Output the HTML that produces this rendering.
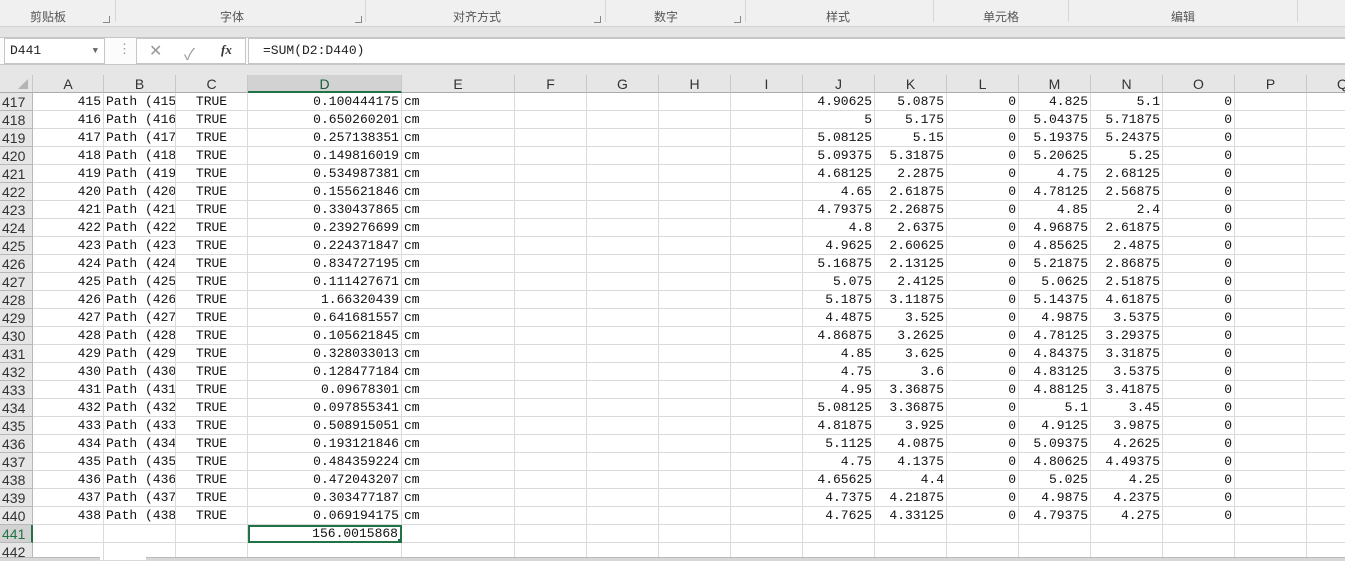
<!DOCTYPE html>
<html><head><meta charset="utf-8"><style>
*{box-sizing:border-box;margin:0;padding:0}
body{width:1345px;height:561px;overflow:hidden;background:#e6e6e6;font-family:"Liberation Sans","Noto Sans CJK SC",sans-serif;position:relative}
.rib{position:absolute;left:0;top:0;width:1345px;height:27px;background:#f0f0f0;border-bottom:1px solid #d2d2d2}
.lb{position:absolute;top:9px;font-size:12px;color:#555;font-family:"Noto Sans CJK SC",sans-serif;line-height:16px;transform:translateX(-50%)}
.sep{position:absolute;top:0;height:22px;width:1px;background:#d6d6d6}
.dl{position:absolute;top:16px;width:7px;height:7px;border-right:1px solid #888;border-bottom:1px solid #888}
.band{position:absolute;left:0;top:27px;width:1345px;height:11px;background:#e4e4e4;border-bottom:1px solid #c6c6c6}
.fb{position:absolute;left:0;top:38px;width:1345px;height:27px;background:#fcfcfc;border-bottom:1px solid #c6c6c6}
.nb{position:absolute;left:4px;top:0;width:101px;height:26px;border:1px solid #c6c6c6;background:#fff;font-family:"Liberation Mono",monospace;font-size:13px;line-height:24px;padding-left:5px;color:#222}
.fx{position:absolute;left:136px;top:0;width:110px;height:26px;border:1px solid #c6c6c6;background:#fff;color:#999}
.fi{position:absolute;left:248px;top:0;width:1100px;height:26px;border:1px solid #c6c6c6;background:#fff;font-family:"Liberation Mono",monospace;font-size:13px;line-height:24px;padding-left:14px;color:#222}
.grid{position:absolute;left:0;top:75px;width:1400px}
.r{display:flex;height:18px;font-family:"Liberation Mono",monospace;font-size:13px;color:#111}
.r>div{flex:none;height:18px;border-right:1px solid #dadada;border-bottom:1px solid #dadada;background:#fff;overflow:hidden;white-space:nowrap;line-height:18px;padding:0 2px}
.r>div.n{text-align:right}
.r>div.h{background:#e6e6e6;font-family:"Liberation Sans",sans-serif;font-size:14px;color:#333;text-align:left;border-right:1px solid #b8b8b8;border-bottom:1px solid #b8b8b8;line-height:19px}
.hd>div{background:#e6e6e6;font-family:"Liberation Sans",sans-serif;font-size:14px;color:#333;text-align:center;border-right:1px solid #c8c8c8;border-bottom:1px solid #ababab}
.c0{width:33px}.cA{width:71px}.cB,.cC{width:72px}.cD{width:154px}.cE{width:113px}.cx{width:72px}.cQ{width:72px}
.cC{text-align:center}
</style></head><body>
<div class="rib">
<span class="lb" style="left:48px">剪贴板</span><span class="lb" style="left:232px">字体</span><span class="lb" style="left:477px">对齐方式</span><span class="lb" style="left:666px">数字</span><span class="lb" style="left:838px">样式</span><span class="lb" style="left:1001px">单元格</span><span class="lb" style="left:1183px">编辑</span>
<div class="sep" style="left:115px"></div><div class="sep" style="left:365px"></div><div class="sep" style="left:605px"></div><div class="sep" style="left:745px"></div><div class="sep" style="left:933px"></div><div class="sep" style="left:1068px"></div><div class="sep" style="left:1297px"></div>
<div class="dl" style="left:103px"></div><div class="dl" style="left:355px"></div><div class="dl" style="left:594px"></div><div class="dl" style="left:734px"></div>
</div>
<div class="band"></div>
<div class="fb">
<div class="nb">D441<span style="position:absolute;right:6px;top:0;font-size:9px;color:#666">▼</span></div>
<span style="position:absolute;left:118px;top:3px;color:#999;font-size:13px">⋮</span>
<div class="fx"><span style="position:absolute;left:12px;top:2px;font-size:16px">✕</span><span style="position:absolute;left:47px;top:2px;font-size:16px">✓</span><span style="position:absolute;left:84px;top:3px;font-size:13px;color:#333;font-style:italic;font-family:'Liberation Serif',serif;font-weight:bold">fx</span></div>
<div class="fi">=SUM(D2:D440)</div>
</div>
<div class="grid">
<div class="r hd"><div class="c0" style="position:relative"><span style="position:absolute;right:4px;bottom:3px;width:0;height:0;border-left:10px solid transparent;border-bottom:10px solid #b4b4b4"></span></div><div class="cA">A</div><div class="cB">B</div><div class="cC">C</div><div class="cD" style="background:#d2d2d2;border-bottom:2px solid #217346;color:#1d5c38">D</div><div class="cE">E</div><div class="cx">F</div><div class="cx">G</div><div class="cx">H</div><div class="cx">I</div><div class="cx">J</div><div class="cx">K</div><div class="cx">L</div><div class="cx">M</div><div class="cx">N</div><div class="cx">O</div><div class="cx">P</div><div class="cQ">Q</div></div>
<div class="r"><div class="c0 h">417</div><div class="cA n">415</div><div class="cB">Path (415)</div><div class="cC">TRUE</div><div class="cD n">0.100444175</div><div class="cE">cm</div><div class="cx"></div><div class="cx"></div><div class="cx"></div><div class="cx"></div><div class="cx n">4.90625</div><div class="cx n">5.0875</div><div class="cx n">0</div><div class="cx n">4.825</div><div class="cx n">5.1</div><div class="cx n">0</div><div class="cx"></div><div class="cQ"></div></div>
<div class="r"><div class="c0 h">418</div><div class="cA n">416</div><div class="cB">Path (416)</div><div class="cC">TRUE</div><div class="cD n">0.650260201</div><div class="cE">cm</div><div class="cx"></div><div class="cx"></div><div class="cx"></div><div class="cx"></div><div class="cx n">5</div><div class="cx n">5.175</div><div class="cx n">0</div><div class="cx n">5.04375</div><div class="cx n">5.71875</div><div class="cx n">0</div><div class="cx"></div><div class="cQ"></div></div>
<div class="r"><div class="c0 h">419</div><div class="cA n">417</div><div class="cB">Path (417)</div><div class="cC">TRUE</div><div class="cD n">0.257138351</div><div class="cE">cm</div><div class="cx"></div><div class="cx"></div><div class="cx"></div><div class="cx"></div><div class="cx n">5.08125</div><div class="cx n">5.15</div><div class="cx n">0</div><div class="cx n">5.19375</div><div class="cx n">5.24375</div><div class="cx n">0</div><div class="cx"></div><div class="cQ"></div></div>
<div class="r"><div class="c0 h">420</div><div class="cA n">418</div><div class="cB">Path (418)</div><div class="cC">TRUE</div><div class="cD n">0.149816019</div><div class="cE">cm</div><div class="cx"></div><div class="cx"></div><div class="cx"></div><div class="cx"></div><div class="cx n">5.09375</div><div class="cx n">5.31875</div><div class="cx n">0</div><div class="cx n">5.20625</div><div class="cx n">5.25</div><div class="cx n">0</div><div class="cx"></div><div class="cQ"></div></div>
<div class="r"><div class="c0 h">421</div><div class="cA n">419</div><div class="cB">Path (419)</div><div class="cC">TRUE</div><div class="cD n">0.534987381</div><div class="cE">cm</div><div class="cx"></div><div class="cx"></div><div class="cx"></div><div class="cx"></div><div class="cx n">4.68125</div><div class="cx n">2.2875</div><div class="cx n">0</div><div class="cx n">4.75</div><div class="cx n">2.68125</div><div class="cx n">0</div><div class="cx"></div><div class="cQ"></div></div>
<div class="r"><div class="c0 h">422</div><div class="cA n">420</div><div class="cB">Path (420)</div><div class="cC">TRUE</div><div class="cD n">0.155621846</div><div class="cE">cm</div><div class="cx"></div><div class="cx"></div><div class="cx"></div><div class="cx"></div><div class="cx n">4.65</div><div class="cx n">2.61875</div><div class="cx n">0</div><div class="cx n">4.78125</div><div class="cx n">2.56875</div><div class="cx n">0</div><div class="cx"></div><div class="cQ"></div></div>
<div class="r"><div class="c0 h">423</div><div class="cA n">421</div><div class="cB">Path (421)</div><div class="cC">TRUE</div><div class="cD n">0.330437865</div><div class="cE">cm</div><div class="cx"></div><div class="cx"></div><div class="cx"></div><div class="cx"></div><div class="cx n">4.79375</div><div class="cx n">2.26875</div><div class="cx n">0</div><div class="cx n">4.85</div><div class="cx n">2.4</div><div class="cx n">0</div><div class="cx"></div><div class="cQ"></div></div>
<div class="r"><div class="c0 h">424</div><div class="cA n">422</div><div class="cB">Path (422)</div><div class="cC">TRUE</div><div class="cD n">0.239276699</div><div class="cE">cm</div><div class="cx"></div><div class="cx"></div><div class="cx"></div><div class="cx"></div><div class="cx n">4.8</div><div class="cx n">2.6375</div><div class="cx n">0</div><div class="cx n">4.96875</div><div class="cx n">2.61875</div><div class="cx n">0</div><div class="cx"></div><div class="cQ"></div></div>
<div class="r"><div class="c0 h">425</div><div class="cA n">423</div><div class="cB">Path (423)</div><div class="cC">TRUE</div><div class="cD n">0.224371847</div><div class="cE">cm</div><div class="cx"></div><div class="cx"></div><div class="cx"></div><div class="cx"></div><div class="cx n">4.9625</div><div class="cx n">2.60625</div><div class="cx n">0</div><div class="cx n">4.85625</div><div class="cx n">2.4875</div><div class="cx n">0</div><div class="cx"></div><div class="cQ"></div></div>
<div class="r"><div class="c0 h">426</div><div class="cA n">424</div><div class="cB">Path (424)</div><div class="cC">TRUE</div><div class="cD n">0.834727195</div><div class="cE">cm</div><div class="cx"></div><div class="cx"></div><div class="cx"></div><div class="cx"></div><div class="cx n">5.16875</div><div class="cx n">2.13125</div><div class="cx n">0</div><div class="cx n">5.21875</div><div class="cx n">2.86875</div><div class="cx n">0</div><div class="cx"></div><div class="cQ"></div></div>
<div class="r"><div class="c0 h">427</div><div class="cA n">425</div><div class="cB">Path (425)</div><div class="cC">TRUE</div><div class="cD n">0.111427671</div><div class="cE">cm</div><div class="cx"></div><div class="cx"></div><div class="cx"></div><div class="cx"></div><div class="cx n">5.075</div><div class="cx n">2.4125</div><div class="cx n">0</div><div class="cx n">5.0625</div><div class="cx n">2.51875</div><div class="cx n">0</div><div class="cx"></div><div class="cQ"></div></div>
<div class="r"><div class="c0 h">428</div><div class="cA n">426</div><div class="cB">Path (426)</div><div class="cC">TRUE</div><div class="cD n">1.66320439</div><div class="cE">cm</div><div class="cx"></div><div class="cx"></div><div class="cx"></div><div class="cx"></div><div class="cx n">5.1875</div><div class="cx n">3.11875</div><div class="cx n">0</div><div class="cx n">5.14375</div><div class="cx n">4.61875</div><div class="cx n">0</div><div class="cx"></div><div class="cQ"></div></div>
<div class="r"><div class="c0 h">429</div><div class="cA n">427</div><div class="cB">Path (427)</div><div class="cC">TRUE</div><div class="cD n">0.641681557</div><div class="cE">cm</div><div class="cx"></div><div class="cx"></div><div class="cx"></div><div class="cx"></div><div class="cx n">4.4875</div><div class="cx n">3.525</div><div class="cx n">0</div><div class="cx n">4.9875</div><div class="cx n">3.5375</div><div class="cx n">0</div><div class="cx"></div><div class="cQ"></div></div>
<div class="r"><div class="c0 h">430</div><div class="cA n">428</div><div class="cB">Path (428)</div><div class="cC">TRUE</div><div class="cD n">0.105621845</div><div class="cE">cm</div><div class="cx"></div><div class="cx"></div><div class="cx"></div><div class="cx"></div><div class="cx n">4.86875</div><div class="cx n">3.2625</div><div class="cx n">0</div><div class="cx n">4.78125</div><div class="cx n">3.29375</div><div class="cx n">0</div><div class="cx"></div><div class="cQ"></div></div>
<div class="r"><div class="c0 h">431</div><div class="cA n">429</div><div class="cB">Path (429)</div><div class="cC">TRUE</div><div class="cD n">0.328033013</div><div class="cE">cm</div><div class="cx"></div><div class="cx"></div><div class="cx"></div><div class="cx"></div><div class="cx n">4.85</div><div class="cx n">3.625</div><div class="cx n">0</div><div class="cx n">4.84375</div><div class="cx n">3.31875</div><div class="cx n">0</div><div class="cx"></div><div class="cQ"></div></div>
<div class="r"><div class="c0 h">432</div><div class="cA n">430</div><div class="cB">Path (430)</div><div class="cC">TRUE</div><div class="cD n">0.128477184</div><div class="cE">cm</div><div class="cx"></div><div class="cx"></div><div class="cx"></div><div class="cx"></div><div class="cx n">4.75</div><div class="cx n">3.6</div><div class="cx n">0</div><div class="cx n">4.83125</div><div class="cx n">3.5375</div><div class="cx n">0</div><div class="cx"></div><div class="cQ"></div></div>
<div class="r"><div class="c0 h">433</div><div class="cA n">431</div><div class="cB">Path (431)</div><div class="cC">TRUE</div><div class="cD n">0.09678301</div><div class="cE">cm</div><div class="cx"></div><div class="cx"></div><div class="cx"></div><div class="cx"></div><div class="cx n">4.95</div><div class="cx n">3.36875</div><div class="cx n">0</div><div class="cx n">4.88125</div><div class="cx n">3.41875</div><div class="cx n">0</div><div class="cx"></div><div class="cQ"></div></div>
<div class="r"><div class="c0 h">434</div><div class="cA n">432</div><div class="cB">Path (432)</div><div class="cC">TRUE</div><div class="cD n">0.097855341</div><div class="cE">cm</div><div class="cx"></div><div class="cx"></div><div class="cx"></div><div class="cx"></div><div class="cx n">5.08125</div><div class="cx n">3.36875</div><div class="cx n">0</div><div class="cx n">5.1</div><div class="cx n">3.45</div><div class="cx n">0</div><div class="cx"></div><div class="cQ"></div></div>
<div class="r"><div class="c0 h">435</div><div class="cA n">433</div><div class="cB">Path (433)</div><div class="cC">TRUE</div><div class="cD n">0.508915051</div><div class="cE">cm</div><div class="cx"></div><div class="cx"></div><div class="cx"></div><div class="cx"></div><div class="cx n">4.81875</div><div class="cx n">3.925</div><div class="cx n">0</div><div class="cx n">4.9125</div><div class="cx n">3.9875</div><div class="cx n">0</div><div class="cx"></div><div class="cQ"></div></div>
<div class="r"><div class="c0 h">436</div><div class="cA n">434</div><div class="cB">Path (434)</div><div class="cC">TRUE</div><div class="cD n">0.193121846</div><div class="cE">cm</div><div class="cx"></div><div class="cx"></div><div class="cx"></div><div class="cx"></div><div class="cx n">5.1125</div><div class="cx n">4.0875</div><div class="cx n">0</div><div class="cx n">5.09375</div><div class="cx n">4.2625</div><div class="cx n">0</div><div class="cx"></div><div class="cQ"></div></div>
<div class="r"><div class="c0 h">437</div><div class="cA n">435</div><div class="cB">Path (435)</div><div class="cC">TRUE</div><div class="cD n">0.484359224</div><div class="cE">cm</div><div class="cx"></div><div class="cx"></div><div class="cx"></div><div class="cx"></div><div class="cx n">4.75</div><div class="cx n">4.1375</div><div class="cx n">0</div><div class="cx n">4.80625</div><div class="cx n">4.49375</div><div class="cx n">0</div><div class="cx"></div><div class="cQ"></div></div>
<div class="r"><div class="c0 h">438</div><div class="cA n">436</div><div class="cB">Path (436)</div><div class="cC">TRUE</div><div class="cD n">0.472043207</div><div class="cE">cm</div><div class="cx"></div><div class="cx"></div><div class="cx"></div><div class="cx"></div><div class="cx n">4.65625</div><div class="cx n">4.4</div><div class="cx n">0</div><div class="cx n">5.025</div><div class="cx n">4.25</div><div class="cx n">0</div><div class="cx"></div><div class="cQ"></div></div>
<div class="r"><div class="c0 h">439</div><div class="cA n">437</div><div class="cB">Path (437)</div><div class="cC">TRUE</div><div class="cD n">0.303477187</div><div class="cE">cm</div><div class="cx"></div><div class="cx"></div><div class="cx"></div><div class="cx"></div><div class="cx n">4.7375</div><div class="cx n">4.21875</div><div class="cx n">0</div><div class="cx n">4.9875</div><div class="cx n">4.2375</div><div class="cx n">0</div><div class="cx"></div><div class="cQ"></div></div>
<div class="r"><div class="c0 h">440</div><div class="cA n">438</div><div class="cB">Path (438)</div><div class="cC">TRUE</div><div class="cD n">0.069194175</div><div class="cE">cm</div><div class="cx"></div><div class="cx"></div><div class="cx"></div><div class="cx"></div><div class="cx n">4.7625</div><div class="cx n">4.33125</div><div class="cx n">0</div><div class="cx n">4.79375</div><div class="cx n">4.275</div><div class="cx n">0</div><div class="cx"></div><div class="cQ"></div></div>
<div class="r"><div class="c0 h" style="background:#d2d2d2;color:#217346;border-right:2px solid #217346">441</div><div class="cA"></div><div class="cB"></div><div class="cC"></div><div class="cD n" style="border:2px solid #217346;line-height:14px;position:relative">156.0015868<span style="position:absolute;right:-3px;bottom:-3px;width:6px;height:6px;background:#217346;border:1px solid #fff"></span></div><div class="cE"></div><div class="cx"></div><div class="cx"></div><div class="cx"></div><div class="cx"></div><div class="cx"></div><div class="cx"></div><div class="cx"></div><div class="cx"></div><div class="cx"></div><div class="cx"></div><div class="cx"></div><div class="cQ"></div></div>
<div class="r"><div class="c0 h">442</div><div class="cA"></div><div class="cB"></div><div class="cC"></div><div class="cD"></div><div class="cE"></div><div class="cx"></div><div class="cx"></div><div class="cx"></div><div class="cx"></div><div class="cx"></div><div class="cx"></div><div class="cx"></div><div class="cx"></div><div class="cx"></div><div class="cx"></div><div class="cx"></div><div class="cQ"></div></div>
</div>
<div style="position:absolute;left:0;top:557px;width:100px;height:4px;background:#d8d8d8;border-top:1px solid #bbb"></div>
<div style="position:absolute;left:146px;top:557px;width:1199px;height:4px;background:#d8d8d8;border-top:1px solid #bbb"></div>
</body></html>
